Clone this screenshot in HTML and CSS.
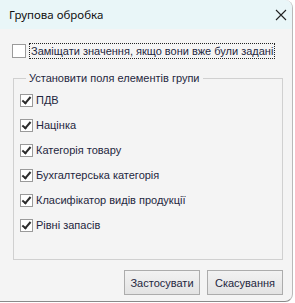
FILE: index.html
```html
<!DOCTYPE html>
<html lang="uk">
<head>
  <meta charset="UTF-8">
  <title>Групова обробка</title>
  <link rel="stylesheet" href="styles.css">
</head>
<body>
  <div class="window">
    <div class="titlebar">
      <span class="title">Групова обробка</span>
      <svg class="close" width="12" height="12" viewBox="0 0 12 12">
        <path d="M1 1L11 11M11 1L1 11" stroke="#222" stroke-width="1.1" fill="none"/>
      </svg>
    </div>

    <div class="content">
      <label class="check replace">
        <span class="box"></span>
        <span class="focus">Заміщати значення, якщо вони вже були задані</span>
      </label>

      <fieldset class="group">
        <legend>Установити поля елементів групи</legend>
        <label class="check"><span class="box checked"></span>ПДВ</label>
        <label class="check"><span class="box checked"></span>Націнка</label>
        <label class="check"><span class="box checked"></span>Категорія товару</label>
        <label class="check"><span class="box checked"></span>Бухгалтерська категорія</label>
        <label class="check"><span class="box checked"></span>Класифікатор видів продукції</label>
        <label class="check"><span class="box checked"></span>Рівні запасів</label>
      </fieldset>

      <div class="buttons">
        <button>Застосувати</button>
        <button>Скасування</button>
      </div>
    </div>
  </div>
</body>
</html>
```

FILE: styles.css
```css
body {
  margin: 0;
  background: #ffffff;
  font-family: "Liberation Sans", Arial, sans-serif;
  font-size: 11px;
  color: #1f2740;
}
.window {
  width: 292px;
  height: 301px;
  background: #f4f4f4;
  border-right: 1px solid #b9b9b9;
  border-bottom: 1px solid #8a8a8a;
  border-radius: 0 8px 8px 0;
  overflow: hidden;
}
.titlebar {
  height: 29px;
  background: #e9f6f8;
  display: flex;
  align-items: center;
  justify-content: space-between;
  padding: 0 5px 0 9px;
}
.title {
  font-family: "Noto Sans", sans-serif;
  font-size: 11.5px;
  color: #111;
}
.content {
  padding: 15px 9px 0 12px;
}
.check {
  display: flex;
  align-items: center;
  height: 14px;
  line-height: 14px;
  white-space: nowrap;
}
.box {
  width: 11px;
  height: 11px;
  border: 1px solid #9a9a9a;
  background: #fff;
  margin-right: 3px;
  position: relative;
  flex: none;
}
.box.checked::after {
  content: "";
  position: absolute;
  left: 3px;
  top: 0px;
  width: 3px;
  height: 7px;
  border: solid #2b2b2b;
  border-width: 0 2px 2px 0;
  transform: rotate(40deg);
}
.replace .box {
  width: 12px;
  height: 12px;
}
.focus {
  outline: 1px dotted #222;
  padding: 0 1px;
  margin-left: 1px;
}
.group {
  margin: 14px 0 0 1px;
  width: 270px;
  height: 188px;
  box-sizing: border-box;
  border: 1px solid #d0d0d0;
  padding: 9px 0 0 6px;
  display: flex;
  flex-direction: column;
  gap: 11px;
}
.group legend {
  padding: 0 3px;
  margin-left: 6px;
  color: #1f2740;
}
.buttons {
  display: flex;
  justify-content: flex-end;
  gap: 7px;
  margin: 10px 0 0 0;
}
button {
  width: 76px;
  height: 25px;
  font-family: "Liberation Sans", Arial, sans-serif;
  font-size: 11px;
  color: #1f2740;
  background: linear-gradient(#f2f2f2, #e3e3e3);
  border: 1px solid #acacac;
  padding: 0;
}
```
